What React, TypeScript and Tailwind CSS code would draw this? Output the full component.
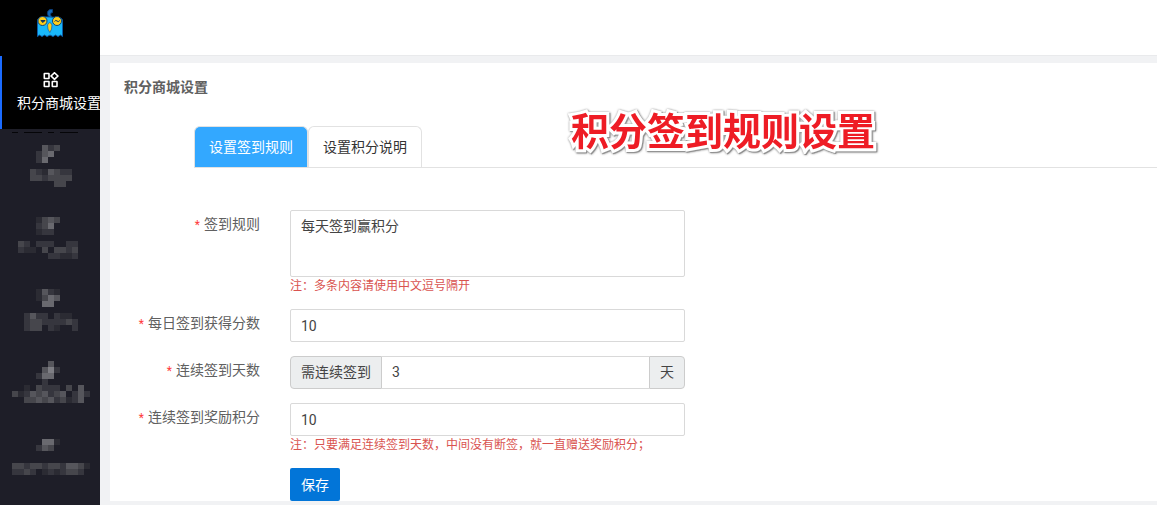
import type { ReactNode } from 'react';

interface MenuBlock {
    id: string;
    rows: string[];
}

interface FormRowProps {
    label: string;
    htmlFor: string;
    note?: string;
    children: ReactNode;
}

const SHADES: Record<string, string> = {
    '1': '#2b2b33',
    '2': '#36363e',
    '3': '#46464c',
    '4': '#56565c',
    '5': '#69696f',
    '6': '#7e7e84',
};

// One character per 6px cell, "." is empty
const BLOCKS: MenuBlock[] = [
    {
        id: 'menu-1',
        rows: ['.......423', '......245', '......25', '', '.....3214322', '.....3323333', '.........33'],
    },
    {
        id: 'menu-2',
        rows: ['......1343', '......235', '......122', '', '...32.222..22', '...211.3.3323', '........22112'],
    },
    {
        id: 'menu-3',
        rows: ['......1421', '......1354', '.......55', '', '....2422.211', '....233222232', '....233.21..2'],
    },
    {
        id: 'menu-4',
        rows: ['........4', '.......462', '......255', '.......2', '....1.3222.3.4', '..312434234.242', '....3343423124'],
    },
    {
        id: 'menu-5',
        rows: ['', '.......551', '......243', '', '', '..3323323324431', '..2232.1212332'],
    },
];

function Logo() {
    return (
        <svg width="28" height="30" viewBox="0 0 28 30" aria-hidden="true">
            <path d="M14 9.5C10.5 7 10.5 3 14 1.5L16.5 1.5V4.5C14 5 14 7 16 9Z" fill="#1268b8" stroke="#0a3c78" />
            <path
                d="M1.5 28.5V13C1.5 9.5 5 8.5 14 9S26.5 9.5 26.5 13V28.5L24.5 27L22 28.5L19.5 27L17 28.5L14 27L11 28.5L8.5 27L6 28.5L3.5 27Z"
                fill="#19b8fa"
                stroke="#0b5ca8"
            />
            <circle cx="6.5" cy="13" r="4.5" fill="#ffce1b" stroke="#0f4478" />
            <circle cx="21" cy="13" r="4.5" fill="#ffce1b" stroke="#0f4478" />
            <path d="M4.8 12.5L7 14.5L9 12.5Z" fill="#14365c" stroke="#14365c" />
            <path d="M18.5 13.5Q19.8 11.5 21 13T23.8 12.5" fill="none" stroke="#14365c" />
            <path d="M11.5 17Q13.8 12 16 17Q16.2 21.5 13.8 24.5Q11.3 21.5 11.5 17Z" fill="#ffce1b" stroke="#1767a8" strokeWidth="0.8" />
        </svg>
    );
}

function AppsIcon() {
    return (
        <svg width="16" height="16" viewBox="0 0 16 16" fill="none" stroke="#fff" strokeWidth="1.6" aria-hidden="true">
            <rect x="1.3" y="1.5" width="4.7" height="5" rx="0.3" />
            <path d="M11.5 0.7L14.9 4L11.5 7.3L8.1 4Z" />
            <rect x="1.3" y="9.5" width="4.7" height="5" rx="0.3" />
            <rect x="9.3" y="9.5" width="4.7" height="5" rx="0.3" />
        </svg>
    );
}

function BlockArt({ rows }: { rows: string[] }) {
    return (
        <svg width="100" height="72" viewBox="0 0 100 72" shapeRendering="crispEdges" aria-hidden="true">
            {rows.map((row, y) =>
                row.split('').map((cell, x) =>
                    cell === '.' ? null : (
                        <rect key={`${x}-${y}`} x={x * 6} y={16 + y * 6} width="6" height="6" fill={SHADES[cell]} />
                    )
                )
            )}
        </svg>
    );
}

function Sidebar() {
    return (
        <aside className="w-[100px] shrink-0 bg-[#1e1e28]">
            <div className="flex h-14 items-start justify-center bg-black pt-2">
                <Logo />
            </div>
            <nav>
                <a
                    href="#points"
                    className="flex h-[73px] flex-col overflow-hidden border-l-2 border-[#1b6bff] bg-black pt-4 text-sm leading-5 text-white"
                >
                    <span className="flex justify-center">
                        <AppsIcon />
                    </span>
                    <span className="mt-[5px] pl-[15px] whitespace-nowrap">积分商城设置</span>
                </a>
                <div className="relative">
                    <svg className="absolute top-0 left-0" width="100" height="4" viewBox="0 0 100 4" aria-hidden="true">
                        <path d="M12 3.5H18M24 3.5H42M48 3.5H54M60 3.5H78" stroke="#050508" />
                    </svg>
                    {BLOCKS.map((block) => (
                        <a key={block.id} href={`#${block.id}`} className="block h-[72px]">
                            <BlockArt rows={block.rows} />
                        </a>
                    ))}
                </div>
            </nav>
        </aside>
    );
}

function FormRow({ label, htmlFor, note, children }: FormRowProps) {
    return (
        <div className="mb-[14px] flex gap-[30px]">
            <label htmlFor={htmlFor} className="w-[150px] shrink-0 pt-1 text-right leading-5 text-[#606060]">
                <span className="mr-1 text-xs text-[#ff3b3b]">*</span>
                {label}
            </label>
            <div className="w-full max-w-[395px]">
                {children}
                {note && <p className="text-xs leading-[18px] text-[#d9534f]">{note}</p>}
            </div>
        </div>
    );
}

const fieldClass = 'block w-full border border-[#d9d9d9] bg-white px-[10px] text-[#444] outline-none';

export default function App() {
    return (
        <div className="flex min-h-screen bg-[#f1f2f4] font-['Roboto','Noto_Sans_CJK_SC',sans-serif] text-sm">
            <Sidebar />
            <div className="flex min-w-0 flex-1 flex-col">
                <header className="h-14 border-b border-[#e9eaec] bg-white" />
                <main className="mt-[7px] ml-[10px] bg-white">
                    <h1 className="px-[14px] pt-[14px] pb-[29px] leading-5 font-bold text-[#606060]">积分商城设置</h1>
                    <div className="relative ml-[84px] flex h-[42px] border-b border-[#e2e2e2]" role="tablist">
                        <button
                            type="button"
                            role="tab"
                            aria-selected="true"
                            className="rounded-t-md border border-b-0 border-[#e2e2e2] bg-[#33a8ff] px-[14px] text-white"
                        >
                            设置签到规则
                        </button>
                        <button
                            type="button"
                            role="tab"
                            aria-selected="false"
                            className="rounded-t-md border border-b-0 border-[#e2e2e2] bg-white px-[14px] text-[#333]"
                        >
                            设置积分说明
                        </button>
                        <h2 className="absolute -top-5 left-[377px] text-[38px] leading-[52px] font-bold whitespace-nowrap text-[#ee1c25] [-webkit-text-stroke:6px_#fff] [paint-order:stroke_fill] [filter:drop-shadow(0_0_1px_#aaa)_drop-shadow(1px_1px_0_#888)]">
                            积分签到规则设置
                        </h2>
                    </div>
                    <form className="pt-[42px]" onSubmit={(e) => e.preventDefault()}>
                        <FormRow label="签到规则" htmlFor="rule" note="注：多条内容请使用中文逗号隔开">
                            <textarea
                                id="rule"
                                defaultValue="每天签到赢积分"
                                className={`${fieldClass} h-[67px] resize-none rounded-xs py-[5px] leading-5`}
                            />
                        </FormRow>
                        <FormRow label="每日签到获得分数" htmlFor="daily">
                            <input id="daily" type="text" defaultValue="10" className={`${fieldClass} h-[33px] rounded-xs`} />
                        </FormRow>
                        <FormRow label="连续签到天数" htmlFor="days">
                            <div className="flex h-[33px] leading-[31px] text-[#444]">
                                <span className="shrink-0 rounded-l-sm border border-[#ccc] bg-[#eceeef] px-[10px]">需连续签到</span>
                                <input
                                    id="days"
                                    type="text"
                                    defaultValue="3"
                                    className="min-w-0 flex-1 border-y border-[#d9d9d9] bg-white px-[10px] outline-none"
                                />
                                <span className="shrink-0 rounded-r-sm border border-[#ccc] bg-[#eceeef] px-[10px]">天</span>
                            </div>
                        </FormRow>
                        <FormRow
                            label="连续签到奖励积分"
                            htmlFor="bonus"
                            note="注：只要满足连续签到天数，中间没有断签，就一直赠送奖励积分；"
                        >
                            <input id="bonus" type="text" defaultValue="10" className={`${fieldClass} h-[33px] rounded-xs`} />
                        </FormRow>
                        <div className="pl-[180px]">
                            <button type="submit" className="block h-[33px] w-[50px] rounded-xs bg-[#0275d8] text-white">
                                保存
                            </button>
                        </div>
                    </form>
                </main>
            </div>
        </div>
    );
}
